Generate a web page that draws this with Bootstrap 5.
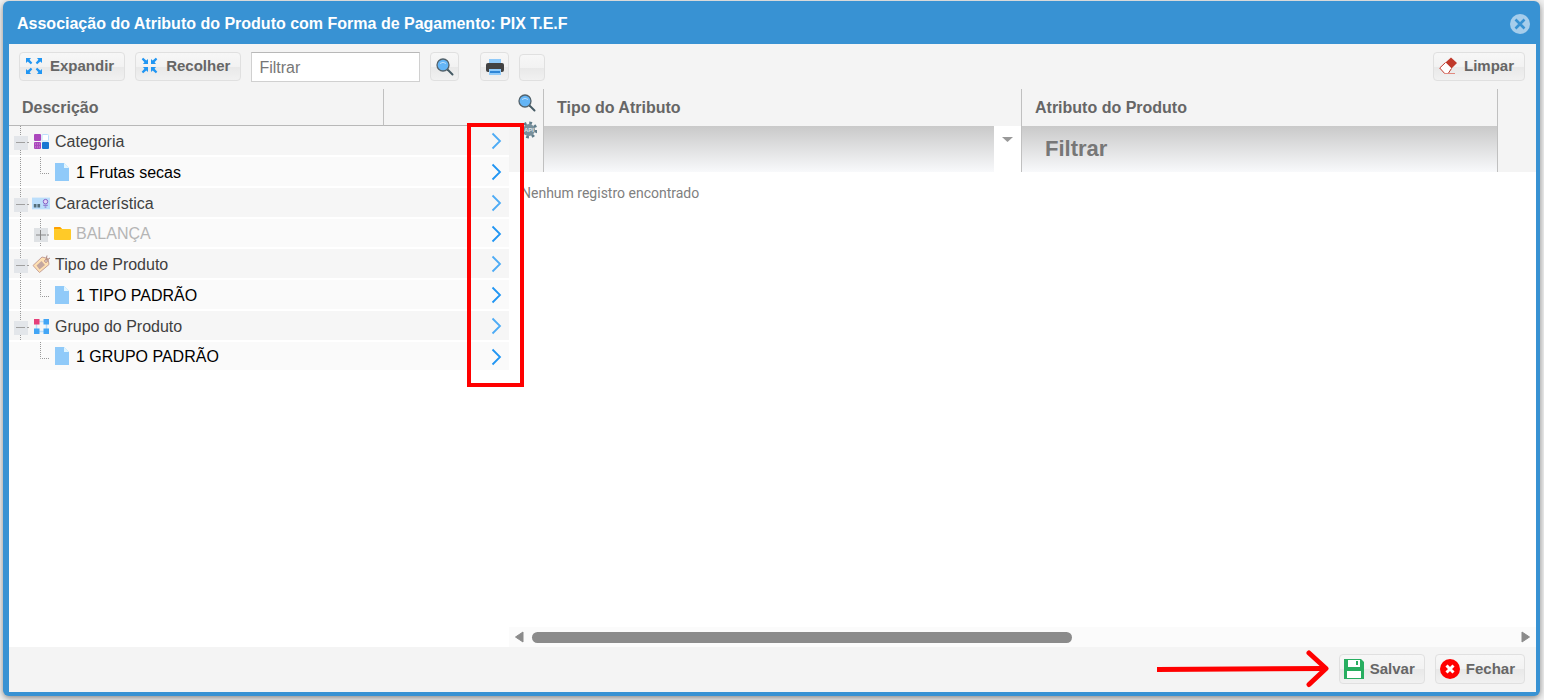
<!DOCTYPE html>
<html lang="pt-BR">
<head>
<meta charset="utf-8">
<meta name="viewport" content="width=device-width, initial-scale=1">
<title>Associação do Atributo do Produto</title>
<link href="https://cdn.jsdelivr.net/npm/bootstrap@5.3.0/dist/css/bootstrap.min.css" rel="stylesheet">
<style>
body{font-family:"Liberation Sans",Arial,sans-serif;font-size:16px;line-height:20px;background:#f1f1f1;color:#404040;overflow:hidden}
svg{display:block;flex:none}
.dialog{height:calc(100vh - 5px);margin:1px 4px 4px 3px;background:#3892d3;border-radius:6px;padding:0 4px 4px 6px;box-shadow:0 2px 6px #888}
.dialog-title{height:43px;color:#fff;font-size:16px;font-weight:700;line-height:20px;padding:3px 6px 0 8px}
.close-btn{background:none;border:0;padding:0}
.panes{background:#fff;min-height:0}
.tree-pane{width:500px;overflow:hidden}
.bar{height:45px;background:#f4f4f4}
.bar-left{padding:8px 0 0 10px;width:540px;gap:10px}
.bar-right{padding:8px 11px 0 10px}
.tool{height:29px;border:1px solid #e0e0e0;border-radius:4px;background:linear-gradient(#f7f7f7 0,#f2f2f2 50%,#e8e8e8 51%,#f1f1f1 100%);color:#666;font-size:15px;font-weight:700;line-height:20px;padding:0 9px 1px 5px;display:flex;align-items:center;gap:7px;white-space:nowrap}
.tool-wide{padding-right:10px}
.tool-icon{width:29px;padding:0;justify-content:center}
.tool-print{margin-left:11px}
.tool-blank{width:26px;height:27px;margin-top:2px}
.filter-box{width:169px;height:30px;border:1px solid #d0d0d0;border-top-color:#b8b8b8;border-radius:0;padding:1px 7px 0;color:#757575;font-size:16px;background:#fff}
.grid-table{table-layout:fixed;width:100%;border-collapse:separate;border-spacing:0}
.grid-table th{height:37px;padding:0 13px;background:#f4f4f4;color:#666;font-size:16px;font-weight:700}
.grid-table.tree th{border-bottom:1px solid #b8b8b8;padding-top:1px}
.tree th + th{border-left:1px solid #c0c0c0}
.tree td{padding:0;border-bottom:2px solid #fff;background:#fafafa;height:31px;vertical-align:top}
.tree tbody tr:nth-child(4n) td{height:30px}
.tree .branch td{background:#f6f6f6}
.tree .leaf{color:#000}
.tree .off{color:#b5b5b5}
.node{height:29px;gap:2px;overflow:hidden}
.tree tr:nth-child(4n) .node{height:28px}
.node-text{padding-left:4px;padding-top:2px;line-height:20px}
.branch .node{gap:1px}
.leaf .node-text,.off .node-text{padding-left:2px}
.go{display:block;border:0;background:none;padding:6px 0 0;margin-left:108px;color:#2196f3}
.branch .go{color:#4dabf5}
.attrs th{border-left:1px solid #c0c0c0}
.grid-table.attrs th:first-child{border-left:0;padding:5px 0 0 9px;vertical-align:top}
.attrs .filters th{height:46px;padding:0}
.grid-table.attrs .filters th:first-child{padding:0 0 0 9px}
.api-btn{margin-top:-6px}
.type-filter,.attr-filter{display:block;width:100%;height:46px;border:0;border-radius:0;appearance:none;outline:0}
.type-filter{background:url("data:image/svg+xml,%3Csvg xmlns='http://www.w3.org/2000/svg' width='27' height='46'%3E%3Cpath d='M0 0h27v46H0z' fill='%23fff'/%3E%3Cpath d='M8 11h11l-5.500 5z' fill='%23999'/%3E%3C/svg%3E") right top no-repeat,linear-gradient(#c9c9c9,#f8f9fb)}
.attr-filter{background:linear-gradient(#c9c9c9,#f8f9fb);font-size:22px;font-weight:700;padding:0 23px;color:#777}
.attr-filter::placeholder,.filter-box::placeholder{color:#777;opacity:1}
.empty-note{font-family:Roboto,"Noto Sans",sans-serif;font-size:14px;line-height:20px;color:#808080;padding:11px 12px}
.track{height:20px;background:#fbfbfb;padding:0 5px;gap:8px}
.thumb-lane{height:11px}
.thumb{width:55%;height:11px;border-radius:6px;background:#8b8b8b}
.foot{height:45px;background:#f4f4f4;padding:0 11px 1px;gap:10px}
.foot .tool{height:30px;gap:6px;padding-left:4px}
.mark-frame{position:absolute;left:458px;top:79px;width:57px;height:264px;border:4px solid #f00;pointer-events:none}
</style>
</head>
<body>
<svg width="0" height="0" class="position-absolute">
<defs>
<g id="lens"><path d="M11.500 11.500l5 5" stroke="#455a64" stroke-width="2" stroke-linecap="round"/><circle cx="7" cy="7" r="6" fill="#64b5f6" stroke="#53626b" stroke-width="1.300"/><path d="M4 5.500q3-2.500 6 0" fill="none" stroke="#bbdefb"/></g>
<g id="arr"><path d="M0 0h5L3.600 1.700 6.300 4.800 4.800 6.300 1.700 3.600 0 5z" fill="#2196f3"/></g>
<g id="doc"><path d="M1 0h9l5 5v13H1z" fill="#90caf9"/><path d="M10 0v5h5z" fill="#e1f5fe"/></g>
<g id="chev"><path d="M1.500 1.500L9 9l-7.500 7.500" fill="none" stroke="currentColor" stroke-width="1.800"/></g>
<g id="minus"><path d="M11.500 0v29" stroke="#999" stroke-dasharray="1 1"/><path d="M5 10h14v14H5z" fill="#e3e6ea"/><path d="M7 16.500h9M18 16.500h2" stroke="#a0a0a0"/></g>
<g id="elbow"><path d="M31.500 0v16.500h9" fill="none" stroke="#999" stroke-dasharray="1 1"/></g>
<g id="trunk"><path d="M11.500 0v29" stroke="#999" stroke-dasharray="1 1"/></g>
</defs>
</svg>
<main class="dialog d-flex flex-column" role="dialog" aria-labelledby="dlg-title">
<header class="dialog-title d-flex align-items-center justify-content-between">
<span id="dlg-title">Associação do Atributo do Produto com Forma de Pagamento: PIX T.E.F</span>
<button class="close-btn" type="button" aria-label="Fechar janela"><svg width="20" height="20" viewBox="0 0 20 20"><circle cx="10" cy="10" r="10" fill="#a6cdeb"/><path d="M5.500 5.500l9 9m0-9l-9 9" stroke="#3892d3" stroke-width="2.600"/></svg></button>
</header>
<div class="panes d-flex flex-grow-1 position-relative">
<section class="tree-pane flex-shrink-0">
<div class="bar bar-left d-flex align-items-start">
<button class="tool tool-wide" type="button"><svg width="18" height="18"><use href="#arr" x="1" y="1"/><use href="#arr" transform="translate(17 1) scale(-1 1)"/><use href="#arr" transform="translate(1 17) scale(1 -1)"/><use href="#arr" transform="translate(17 17) scale(-1 -1)"/></svg>Expandir</button>
<button class="tool tool-wide" type="button"><svg width="18" height="18"><use href="#arr" transform="translate(7 7) scale(-1 -1)"/><use href="#arr" transform="translate(10 7) scale(1 -1)"/><use href="#arr" transform="translate(7 10) scale(-1 1)"/><use href="#arr" x="10" y="10"/></svg>Recolher</button>
<input class="filter-box" type="text" placeholder="Filtrar" aria-label="Filtrar descrição">
<button class="tool tool-icon" type="button" aria-label="Pesquisar"><svg width="18" height="18"><use href="#lens"/></svg></button>
<button class="tool tool-icon tool-print" type="button" aria-label="Imprimir"><svg width="18" height="18"><path d="M3 1h12v5H3z" fill="#90caf9"/><rect y="5" width="18" height="9" rx="2" fill="#424242"/><path d="M3 11h12v6H3z" fill="#90caf9"/><path d="M4 13h10v2H4z" fill="#2f86d6"/></svg></button>
</div>
<table class="grid-table tree">
<colgroup><col style="width:374px"><col></colgroup>
<thead><tr><th scope="col">Descrição</th><th aria-label="Associar"></th></tr></thead>
<tbody>
<tr class="branch"><td><div class="node d-flex align-items-center"><svg width="22" height="29"><use href="#minus"/></svg><svg width="18" height="18"><rect x="2" y="2" width="7" height="7" rx="1" fill="#ab47bc"/><rect x="10" y="2.500" width="6.500" height="6.500" rx="1" fill="#fff" stroke="#bbdefb"/><rect x="2" y="10" width="7" height="7" rx="1" fill="#ab47bc"/><path d="M3 12h5M3 15h5" stroke="#ce93d8" stroke-dasharray="1 1"/><rect x="10" y="10" width="7" height="7" rx="1" fill="#1976d2"/></svg><span class="node-text">Categoria</span></div></td><td><button class="go" type="button" aria-label="Associar Categoria"><svg width="12" height="18"><use href="#chev"/></svg></button></td></tr>
<tr class="leaf"><td><div class="node d-flex align-items-center"><svg width="43" height="29"><use href="#trunk"/><use href="#elbow"/></svg><svg width="18" height="18"><use href="#doc"/></svg><span class="node-text">1 Frutas secas</span></div></td><td><button class="go" type="button" aria-label="Associar Frutas secas"><svg width="12" height="18"><use href="#chev"/></svg></button></td></tr>
<tr class="branch"><td><div class="node d-flex align-items-center"><svg width="22" height="29"><use href="#minus"/></svg><svg width="18" height="18" viewBox="0 0 20 20"><path d="M0 4h20v13H0z" fill="#bbdefb"/><path d="M2 11h3v4H2zM6 11h3v4H6z" fill="#546e7a"/><circle cx="15" cy="8.500" r="2.500" fill="#e1d5f5" stroke="#7e57c2"/><path d="M12.500 12.500h5M14 14.500h2" stroke="#7e57c2"/></svg><span class="node-text">Característica</span></div></td><td><button class="go" type="button" aria-label="Associar Característica"><svg width="12" height="18"><use href="#chev"/></svg></button></td></tr>
<tr class="off"><td><div class="node d-flex align-items-center"><svg width="43" height="29"><use href="#trunk"/><path d="M31.500 0v29" stroke="#999" stroke-dasharray="1 1"/><path d="M25 9h14v14H25z" fill="#dfe2e5"/><path d="M27 16h10M31.500 11v10M38 16h2" stroke="#888"/></svg><svg width="18" height="18"><path d="M0 4q0-1 1-1h5l2 2h8q1 0 1 1v9q0 1-1 1H1q-1 0-1-1z" fill="#ffca28"/><path d="M0 5V4q0-1 1-1h5l2 2z" fill="#ffa000"/></svg><span class="node-text">BALANÇA</span></div></td><td><button class="go" type="button" aria-label="Associar Balança"><svg width="12" height="18"><use href="#chev"/></svg></button></td></tr>
<tr class="branch"><td><div class="node d-flex align-items-center"><svg width="22" height="29"><use href="#minus"/></svg><svg width="18" height="18"><path d="M1 10.500L10 2l6 1.500 1 6L7.500 17.500z" fill="#ffe0b2" stroke="#c5a097" stroke-linejoin="round"/><path d="M4.500 10.500l5-4.500 3.500 4-5.500 4.500z" fill="#c4a7a0"/><circle cx="14" cy="6" r="1.300" fill="#fff" stroke="#b0857d"/><path d="M14 5l1-4.500M15 5l3-2" stroke="#b08a83"/></svg><span class="node-text">Tipo de Produto</span></div></td><td><button class="go" type="button" aria-label="Associar Tipo de Produto"><svg width="12" height="18"><use href="#chev"/></svg></button></td></tr>
<tr class="leaf"><td><div class="node d-flex align-items-center"><svg width="43" height="29"><use href="#trunk"/><use href="#elbow"/></svg><svg width="18" height="18"><use href="#doc"/></svg><span class="node-text">1 TIPO PADRÃO</span></div></td><td><button class="go" type="button" aria-label="Associar Tipo padrão"><svg width="12" height="18"><use href="#chev"/></svg></button></td></tr>
<tr class="branch"><td><div class="node d-flex align-items-center"><svg width="22" height="29"><use href="#minus"/></svg><svg width="18" height="18"><path d="M4.500 4.500h10v10h-10z" fill="none" stroke="#bbdefb" stroke-width="1.500"/><path d="M2 2h5.500v5.500H2z" fill="#e6407a"/><path d="M11.500 2H17v5.500h-5.500zM2 11.500h5.500V17H2zM11.500 11.500H17V17h-5.500z" fill="#42a5f5"/></svg><span class="node-text">Grupo do Produto</span></div></td><td><button class="go" type="button" aria-label="Associar Grupo do Produto"><svg width="12" height="18"><use href="#chev"/></svg></button></td></tr>
<tr class="leaf"><td><div class="node d-flex align-items-center"><svg width="43" height="29"><use href="#elbow"/></svg><svg width="18" height="18"><use href="#doc"/></svg><span class="node-text">1 GRUPO PADRÃO</span></div></td><td><button class="go" type="button" aria-label="Associar Grupo padrão"><svg width="12" height="18"><use href="#chev"/></svg></button></td></tr>
</tbody>
</table>
</section>
<section class="flex-grow-1 d-flex flex-column">
<div class="bar bar-right d-flex justify-content-between align-items-start">
<button class="tool tool-blank p-0" type="button" aria-label="Opções"></button>
<button class="tool tool-wide" type="button"><svg width="18" height="18"><path d="M6.500 5.500L12 .5l6 5.500-5.500 5.500z" fill="#c0392b"/><path d="M6.500 5.500L.7 11l5 5.500h3.500l3.300-5" fill="#fff" stroke="#c0392b"/><path d="M5 16.500h11" stroke="#e08a80"/></svg>Limpar</button>
</div>
<table class="grid-table attrs">
<colgroup><col style="width:34px"><col style="width:478px"><col><col style="width:39px"></colgroup>
<thead>
<tr><th><button class="close-btn d-block" type="button" aria-label="Pesquisar atributos"><svg width="18" height="18"><use href="#lens"/></svg></button></th><th scope="col">Tipo do Atributo</th><th scope="col">Atributo do Produto</th><th></th></tr>
<tr class="filters"><th><button class="close-btn api-btn d-block" type="button" aria-label="API"><svg width="19" height="20" viewBox="0 0 19 20"><circle cx="11" cy="10" r="7" fill="none" stroke="#607d8b" stroke-width="3" stroke-dasharray="2.700 2.800"/><circle cx="11" cy="10" r="6" fill="#78909c"/><text x="11" y="12" font-size="6" font-weight="700" text-anchor="middle" fill="#dce4e8">API</text></svg></button></th><th><select class="type-filter" aria-label="Filtrar tipo do atributo"><option></option></select></th><th><input class="attr-filter" type="text" placeholder="Filtrar" aria-label="Filtrar atributo do produto"></th><th></th></tr>
</thead>
</table>
<div class="empty-note flex-grow-1">Nenhum registro encontrado</div>
<div class="track d-flex align-items-center">
<svg width="10" height="12"><path d="M9 1v10L1.500 6z" fill="#8b8b8b" stroke="#8b8b8b" stroke-linejoin="round"/></svg>
<div class="thumb-lane flex-grow-1"><div class="thumb"></div></div>
<svg width="10" height="12"><path d="M1 1v10l7.500-5z" fill="#8b8b8b" stroke="#8b8b8b" stroke-linejoin="round"/></svg>
</div>
</section>
<div class="mark-frame"></div>
</div>
<footer class="foot d-flex align-items-center justify-content-end">
<svg width="172" height="38" viewBox="0 0 172 38"><path d="M0 19.500L168 18.500" stroke="#f00" stroke-width="5"/><path d="M152 3l17 15.500-17 16" fill="none" stroke="#f00" stroke-width="5" stroke-linecap="round" stroke-linejoin="round"/></svg>
<button class="tool" type="button"><svg width="20" height="20"><path d="M0 0h17l3 3v17H0z" fill="#27ae60"/><path d="M4 1h12v7H4zM3 12h14v7H3z" fill="#fff"/><path d="M12 2h2v4h-2z" fill="#27ae60"/></svg>Salvar</button>
<button class="tool" type="button"><svg width="20" height="20"><circle cx="10" cy="10" r="10" fill="#f00"/><path d="M6.500 6.500l7 7m0-7l-7 7" stroke="#fff" stroke-width="3"/></svg>Fechar</button>
</footer>
</main>
<script src="https://cdn.jsdelivr.net/npm/bootstrap@5.3.0/dist/js/bootstrap.bundle.min.js"></script>
</body>
</html>
